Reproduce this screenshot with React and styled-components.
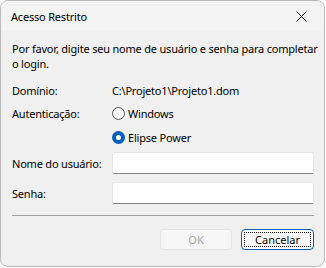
import styled, { createGlobalStyle } from "styled-components";

const GlobalStyle = createGlobalStyle`
  html, body {
    margin: 0;
    padding: 0;
    background: #ffffff;
  }
  body {
    font-family: "Noto Sans", "Open Sans", sans-serif;
    font-size: 11px;
    letter-spacing: -0.2px;
    color: #000;
  }
`;

const Window = styled.div`
  width: 325px;
  height: 267px;
  box-sizing: border-box;
  border: 1px solid #b9b9b9;
  border-radius: 8px;
  overflow: hidden;
  background: #f0f0f0;
  display: flex;
  flex-direction: column;
`;

const TitleBar = styled.div`
  height: 30px;
  flex: none;
  display: flex;
  align-items: center;
  justify-content: space-between;
  padding: 0 10px 0 10px;
  background: #f3f3f3;
`;

const Title = styled.span`
  font-size: 11px;
`;

const CloseButton = styled.button`
  width: 20px;
  height: 20px;
  padding: 0;
  margin-right: 3px;
  border: none;
  background: transparent;
  display: flex;
  align-items: center;
  justify-content: center;
`;

const Body = styled.div`
  padding: 10px 10px 0 11px;
  display: flex;
  flex-direction: column;
`;

const Message = styled.p`
  margin: 0;
  line-height: 15px;
  white-space: nowrap;
`;

const Row = styled.div`
  display: flex;
  align-items: center;
  height: ${(p) => p.$h || 24}px;
  margin-top: ${(p) => p.$mt || 0}px;
`;

const Label = styled.label`
  width: 100px;
  flex: none;
  white-space: nowrap;
`;

const Value = styled.span`
  flex: 1;
  white-space: nowrap;
`;

const RadioOption = styled.label`
  display: flex;
  align-items: center;
  gap: 3px;
  white-space: nowrap;
`;

const RadioDot = styled.span`
  width: 13px;
  height: 13px;
  box-sizing: border-box;
  border-radius: 50%;
  flex: none;
  border: ${(p) => (p.$checked ? "none" : "1px solid #5a5a5a")};
  background: ${(p) => (p.$checked ? "#005fb8" : "#f7f7f7")};
  display: flex;
  align-items: center;
  justify-content: center;

  &::after {
    content: "";
    display: ${(p) => (p.$checked ? "block" : "none")};
    width: 5px;
    height: 5px;
    border-radius: 50%;
    background: #fff;
  }
`;

const TextBox = styled.input`
  flex: 1;
  min-width: 0;
  height: 22px;
  box-sizing: border-box;
  margin: 0;
  border: 1px solid #e6e6e6;
  border-bottom: 1px solid #868686;
  border-radius: 2px;
  background: #fff;
  outline: none;
  font: inherit;
  padding: 0 6px;
`;

const Separator = styled.hr`
  margin: 11px 0 0 0;
  border: none;
  border-top: 1px solid #a0a0a0;
  height: 0;
`;

const Buttons = styled.div`
  display: flex;
  justify-content: flex-end;
  gap: 9px;
  margin-top: 13px;
`;

const Button = styled.button`
  width: ${(p) => p.$w || 72}px;
  height: 21px;
  box-sizing: border-box;
  padding: 0;
  border-radius: 4px;
  font: inherit;
  position: relative;
  background: ${(p) => (p.disabled ? "#f5f5f5" : "#fdfdfd")};
  color: ${(p) => (p.disabled ? "#a3a3a3" : "#000")};
  border: 1px solid ${(p) => (p.$focused ? "#005fb8" : "#e5e5e5")};

  &::after {
    content: "";
    display: ${(p) => (p.$focused ? "block" : "none")};
    position: absolute;
    inset: 2px;
    border: 1px dotted #000;
  }
`;

const CloseIcon = () => (
  <svg width="11" height="11" viewBox="0 0 11 11">
    <path d="M0.5 0.5 L10.5 10.5 M10.5 0.5 L0.5 10.5" stroke="#1a1a1a" strokeWidth="1" fill="none" />
  </svg>
);

export default function App() {
  return (
    <>
      <GlobalStyle />
      <Window>
        <TitleBar>
          <Title>Acesso Restrito</Title>
          <CloseButton aria-label="Fechar">
            <CloseIcon />
          </CloseButton>
        </TitleBar>
        <Body>
          <Message>
            Por favor, digite seu nome de usuário e senha para completar
            <br />o login.
          </Message>
          <Row $h={21} $mt={9}>
            <Label>Domínio:</Label>
            <Value>C:\Projeto1\Projeto1.dom</Value>
          </Row>
          <Row>
            <Label>Autenticação:</Label>
            <RadioOption>
              <RadioDot />
              Windows
            </RadioOption>
          </Row>
          <Row>
            <Label />
            <RadioOption>
              <RadioDot $checked />
              Elipse Power
            </RadioOption>
          </Row>
          <Row $h={22} $mt={3}>
            <Label>Nome do usuário:</Label>
            <TextBox type="text" />
          </Row>
          <Row $h={22} $mt={8}>
            <Label>Senha:</Label>
            <TextBox type="password" />
          </Row>
          <Separator />
          <Buttons>
            <Button disabled>OK</Button>
            <Button $w={73} $focused>
              Cancelar
            </Button>
          </Buttons>
        </Body>
      </Window>
    </>
  );
}
